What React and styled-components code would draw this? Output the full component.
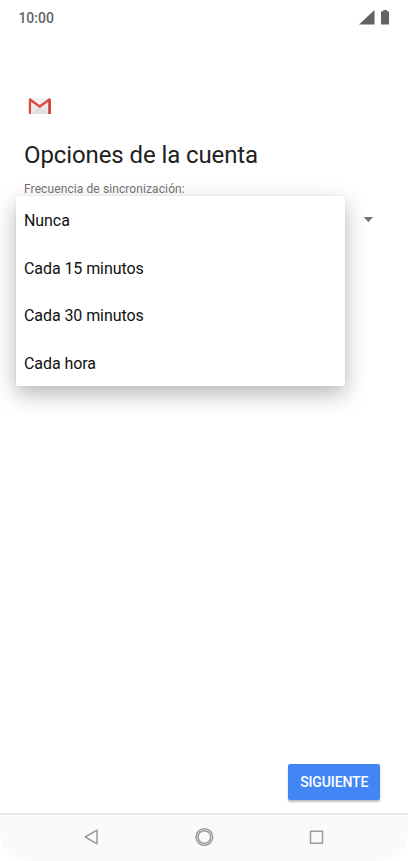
import React, { useState } from "react";
import styled, { createGlobalStyle } from "styled-components";

const GlobalStyle = createGlobalStyle`
  * {
    box-sizing: border-box;
  }

  body {
    margin: 0;
    background-color: #fff;
    font-family: Roboto, "Liberation Sans", sans-serif;
  }
`;

const Screen = styled.div`
  display: flex;
  flex-direction: column;
  width: 408px;
  height: 861px;
  background-color: #fff;
  overflow: hidden;
`;

const StatusBar = styled.header`
  display: flex;
  justify-content: space-between;
  align-items: center;
  height: 35px;
  padding: 0 19px 0 18.4px;
  color: #636363;
`;

const Clock = styled.span`
  font-size: 14px;
  font-weight: 500;
`;

const StatusIcons = styled.div`
  display: flex;
  align-items: center;
  gap: 6px;
`;

const Content = styled.main`
  display: flex;
  flex-direction: column;
  flex: 1;
  padding: 62px 24px 0;
`;

const LogoWrapper = styled.div`
  height: 18px;
  padding-left: 4px;

  svg {
    display: block;
  }
`;

const Title = styled.h1`
  margin: 24px 0 0;
  color: #212121;
  font-size: 24px;
  font-weight: 400;
  line-height: 32px;
  letter-spacing: -0.1px;
  white-space: nowrap;
`;

const Label = styled.label`
  margin-top: 10px;
  color: #757575;
  font-size: 12px;
  line-height: 16px;
  letter-spacing: 0.1px;
`;

const SelectField = styled.div`
  position: relative;
  display: flex;
  justify-content: flex-end;
  align-items: center;
  height: 46px;
  padding-right: 11px;
`;

const Menu = styled.ul`
  position: absolute;
  top: -1px;
  left: -8px;
  width: 328.5px;
  margin: 0;
  padding: 0;
  list-style: none;
  background-color: #fff;
  border-radius: 1px;
  box-shadow: 0 0 1px rgba(0, 0, 0, 0.2), 0 8px 22px rgba(0, 0, 0, 0.29);
`;

const MenuItem = styled.li`
  display: flex;
  align-items: center;
  height: 47.6px;
  padding: 1.3px 8px 0;
  color: #111;
  font-size: 16px;
  letter-spacing: -0.08px;
  cursor: pointer;
`;

const Actions = styled.div`
  display: flex;
  justify-content: flex-end;
  padding: 0 27.6px 13px 0;
`;

const NextButton = styled.button`
  width: 92.4px;
  height: 36px;
  padding: 0;
  border: 0;
  border-radius: 2px;
  background-color: #4285f4;
  color: #fff;
  font-family: inherit;
  font-size: 14px;
  font-weight: 500;
  letter-spacing: -0.12px;
  box-shadow: 0 2px 2px rgba(0, 0, 0, 0.26);
`;

const NavigationBar = styled.nav`
  height: 48px;
  border-top: 2px solid #ebebeb;
`;

const NavButtons = styled.div`
  display: flex;
  justify-content: space-between;
  align-items: center;
  height: 46px;
  padding: 0 81px 2px 82px;
  border-radius: 0 0 28px 28px;
  background-color: #fafafa;
`;

const NavIcon = styled.svg`
  display: block;
  width: 20px;
  height: 20px;
  fill: none;
  stroke: #9b9b9b;
  stroke-width: 1.5;
  stroke-linejoin: round;
`;

const options = ["Nunca", "Cada 15 minutos", "Cada 30 minutos", "Cada hora"];

function GmailLogo() {
    return (
        <svg width="24" height="18" viewBox="0 0 24 18">
            <path d="M2 1h19v16H2z" fill="#e9e9e9" />
            <path d="M3 17l8.7-8 8.8 8z" fill="#e0e0e0" />
            <path d="M2 1h19l-9.3 8z" fill="#f1f1f1" />
            <path d="M2 1L.8 2v14q0 1 1 1H3V4.8l8.700 6.200 8.800-6.200V17h1.200q1 0 1-1V2L21.300 1l-9.600 7z" fill="#dc4c40" />
            <path d="M20.5 4.8L22.7 2v14q0 1-1 1h-1.200z" fill="#c53a2f" />
        </svg>
    );
}

function SignalIcon() {
    return (
        <svg width="16" height="15" viewBox="0 0 16 15">
            <path d="M0 14.5L15.5 0v14.5z" fill="#636363" />
        </svg>
    );
}

function BatteryIcon() {
    return (
        <svg width="8" height="15" viewBox="0 0 8 15">
            <path d="M2.3 0h3.5v1.2H7.5q.5 0 .5.5V14q0 .6-.6.6H.6Q0 14.6 0 14V1.7q0-.5.5-.5h1.8z" fill="#636363" />
        </svg>
    );
}

export default function App() {
    const [open, setOpen] = useState(true);

    return (
        <Screen>
            <GlobalStyle />
            <StatusBar>
                <Clock>10:00</Clock>
                <StatusIcons>
                    <SignalIcon />
                    <BatteryIcon />
                </StatusIcons>
            </StatusBar>
            <Content>
                <LogoWrapper>
                    <GmailLogo />
                </LogoWrapper>
                <Title>Opciones de la cuenta</Title>
                <Label>Frecuencia de sincronización:</Label>
                <SelectField onClick={() => setOpen(!open)}>
                    <svg width="10" height="6" viewBox="0 0 10 6">
                        <path d="M.8 0H10L5.4 5.300z" fill="#757575" />
                    </svg>
                    {open && (
                        <Menu>
                            {options.map((option) => (
                                <MenuItem key={option}>{option}</MenuItem>
                            ))}
                        </Menu>
                    )}
                </SelectField>
            </Content>
            <Actions>
                <NextButton>SIGUIENTE</NextButton>
            </Actions>
            <NavigationBar>
                <NavButtons>
                    <NavIcon viewBox="0 0 20 20">
                        <path d="M3.2 10L15 3.2v13.6z" />
                    </NavIcon>
                    <NavIcon viewBox="0 0 20 20">
                        <circle cx="9.4" cy="10" r="8.3" />
                        <circle cx="9.4" cy="10" r="6.3" />
                    </NavIcon>
                    <NavIcon viewBox="0 0 20 20">
                        <path d="M3.5 4.2h12v12h-12z" />
                    </NavIcon>
                </NavButtons>
            </NavigationBar>
        </Screen>
    );
}
